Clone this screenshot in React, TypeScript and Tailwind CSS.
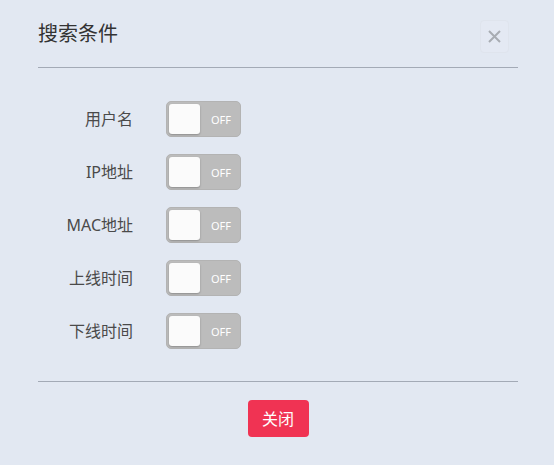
const fields = ["用户名", "IP地址", "MAC地址", "上线时间", "下线时间"];

function Toggle() {
  return (
    <div className="flex h-[36px] w-[75px] items-center rounded-[5px] border border-[#b3b3b3] bg-[#bcbcbc] p-[2px]">
      <div className="h-[30px] w-[31px] rounded-[3px] bg-[#fbfbfb] shadow-[0_1px_2px_rgba(0,0,0,0.25)]" />
      <span className="ml-[11px] text-[11px] leading-none text-white">OFF</span>
    </div>
  );
}

export default function App() {
  return (
    <div
      className="flex h-[465px] w-[554px] flex-col bg-[#e2e8f2] pl-[38px] pr-[36px]"
      style={{ fontFamily: '"Noto Sans","Noto Sans CJK SC",sans-serif' }}
    >
      <div className="flex h-[68px] items-center justify-between border-b border-[#a3aab6]">
        <h1 className="text-[20px] text-[#333]">搜索条件</h1>
        <button className="mr-[9px] mt-[6px] flex h-[33px] w-[29px] items-center justify-center rounded-[4px] border border-[#dfe4ed] bg-[#e4e9f3]">
          <svg width="13" height="13" viewBox="0 0 13 13" fill="none" stroke="#a8acb2" strokeWidth="2">
            <path d="M1 1L12 12M12 1L1 12" />
          </svg>
        </button>
      </div>

      <div className="flex flex-col gap-[17px] border-b border-[#a3aab6] pb-[32px] pt-[33px]">
        {fields.map((f) => (
          <div key={f} className="flex items-center">
            <label className="w-[95px] text-right text-[16px] text-[#4a4a4a]">{f}</label>
            <div className="ml-[33px]">
              <Toggle />
            </div>
          </div>
        ))}
      </div>

      <div className="flex justify-center pt-[18px]">
        <button className="h-[37px] w-[61px] rounded-[4px] bg-[#f03353] text-[16px] text-white">
          关闭
        </button>
      </div>
    </div>
  );
}
